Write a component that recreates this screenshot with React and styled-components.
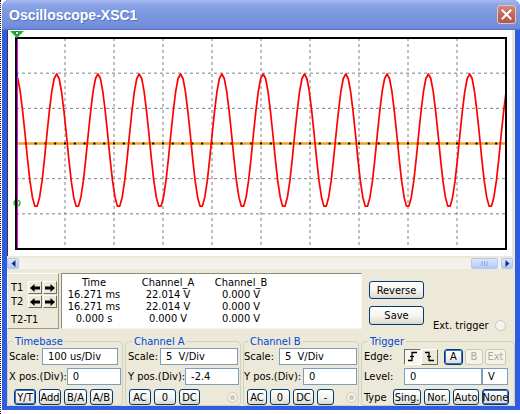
import React from 'react';
import styled, { createGlobalStyle } from 'styled-components';

const GlobalStyle = createGlobalStyle`
  html, body {
    margin: 0;
    padding: 0;
    background: #fff;
    overflow: hidden;
  }
  body {
    font-family: Tahoma, "DejaVu Sans Condensed", "Liberation Sans", sans-serif;
    font-size: 11px;
  }
`;

const Desk = styled.div`
  width: 520px;
  height: 414px;
  display: flex;
  box-sizing: border-box;
  border-left: 1px dotted #222;
  padding-left: 1px;
`;

const Window = styled.div`
  width: 518px;
  height: 410px;
  display: flex;
  flex-direction: column;
  background: #2f5ce0;
  border-radius: 7px 7px 0 0;
  overflow: hidden;
`;

const TitleBar = styled.div`
  height: 30px;
  flex: none;
  display: flex;
  align-items: center;
  justify-content: space-between;
  padding: 0 4px 0 7px;
  box-sizing: border-box;
  background: linear-gradient(180deg, #a7bbf0 0%, #8aa3e6 18%, #7b96df 50%, #7590dc 85%, #6a86d6 100%);
  border-bottom: 1px solid #5874c6;
`;

const Title = styled.span`
  color: #fff;
  font-family: "Liberation Sans", Arial, sans-serif;
  font-weight: bold;
  font-size: 14px;
  text-shadow: 1px 1px 0 rgba(40, 60, 140, 0.4);
`;

const CloseButton = styled.div`
  width: 19px;
  height: 19px;
  box-sizing: border-box;
  border: 1px solid #e9c4bb;
  border-radius: 3px;
  background: linear-gradient(180deg, #d48a7b 0%, #c0675a 50%, #b25a4f 100%);
  display: flex;
  align-items: center;
  justify-content: center;
`;

const Body = styled.div`
  flex: 1;
  margin: 0 5px 4px 5px;
  background: #ece9d8;
  display: flex;
  flex-direction: column;
`;

const Screen = styled.div`
  height: 226px;
  flex: none;
  margin-right: 3px;
  background: #fff;
  border-left: 1px solid #3c3c3c;
  box-sizing: border-box;
`;

const HScroll = styled.div`
  height: 11px;
  margin: 2px 2px 0 0;
  display: flex;
  background: #f3f1ea;
`;

const ScrollBtn = styled.div`
  width: ${({ $w }) => $w}px;
  box-sizing: border-box;
  border: 1px solid #b4c6f2;
  border-radius: 2px;
  background: linear-gradient(180deg, #dde6fd 0%, #c4d4fb 60%, #b3c6f6 100%);
  display: flex;
  align-items: center;
  justify-content: center;
  margin-left: ${({ $ml }) => $ml || 0};
`;

const Controls = styled.div`
  display: flex;
  flex-direction: column;
  padding-top: 4px;
  gap: 6px;
`;

const TopRow = styled.div`
  height: 56px;
  display: flex;
`;

const CursorBox = styled.div`
  width: 52px;
  box-sizing: border-box;
  border: 1px solid;
  border-color: #fff #9d9a8a #9d9a8a #fff;
  display: grid;
  grid-template-columns: 1fr auto;
  grid-template-rows: 13px 13px 1fr;
  row-gap: 1px;
  padding: 7px 1px 0 3px;
`;

const CursorLabel = styled.span`
  display: flex;
  align-items: center;
  grid-column: ${({ $span }) => ($span ? '1 / 3' : 'auto')};
  padding-top: ${({ $span }) => ($span ? '1px' : 0)};
`;

const ArrowPair = styled.div`
  display: flex;
  gap: 1px;
`;

const ArrowBtn = styled.div`
  width: 14px;
  height: 13px;
  box-sizing: border-box;
  border: 1px solid;
  border-color: #fff #716f64 #716f64 #fff;
  background: #ece9d8;
  display: flex;
  align-items: center;
  justify-content: center;
`;

const Readout = styled.div`
  width: 301px;
  margin-left: 2px;
  box-sizing: border-box;
  background: #fff;
  border: 1px solid;
  border-color: #8a887c #f6f5f0 #f6f5f0 #8a887c;
  display: grid;
  grid-template-columns: 64px 84px 62px;
  grid-auto-rows: 12px;
  padding-top: 3px;
`;

const Cell = styled.span`
  text-align: center;
  line-height: 12px;
  white-space: nowrap;
`;

const SideButtons = styled.div`
  display: flex;
  flex-direction: column;
  gap: 7px;
  margin-left: 7px;
  padding-top: 8px;
`;

const XpButton = styled.div`
  width: ${({ $w }) => $w}px;
  height: ${({ $h }) => $h || 16}px;
  box-sizing: border-box;
  border: 1px solid ${({ $off }) => ($off ? '#c9c7ba' : '#003c74')};
  border-radius: 3px;
  background: ${({ $off }) =>
    $off ? '#f5f4ea' : 'linear-gradient(180deg, #ffffff 0%, #f4f3ee 55%, #dcd8cc 100%)'};
  color: ${({ $off }) => ($off ? '#aca899' : '#000')};
  box-shadow: ${({ $on }) => ($on ? 'inset 0 0 0 1px #3d6fd0' : 'none')};
  display: flex;
  align-items: center;
  justify-content: center;
  white-space: nowrap;
  flex: none;
`;

const ExtTrigger = styled.div`
  align-self: flex-end;
  margin: 0 0 -3px 9px;
  display: flex;
  align-items: center;
  gap: 6px;
  height: 14px;
`;

const Radio = styled.div`
  width: 11px;
  height: 11px;
  box-sizing: border-box;
  border-radius: 50%;
  border: 1px solid #cac8bb;
  background: #f4f3ee;
  display: flex;
  align-items: center;
  justify-content: center;
  flex: none;
  margin-left: ${({ $ml }) => $ml || 0};
  &::after {
    content: '';
    display: ${({ $dot }) => ($dot ? 'block' : 'none')};
    width: 5px;
    height: 5px;
    border-radius: 50%;
    background: #cdcbc0;
  }
`;

const BottomRow = styled.div`
  height: 71px;
  display: flex;
  gap: 2px;
`;

const Group = styled.fieldset`
  width: ${({ $w }) => $w}px;
  margin: 0;
  padding: 0 ${({ $pr }) => $pr ?? 3}px 0 ${({ $pl }) => $pl ?? 1}px;
  box-sizing: border-box;
  border: 1px solid #d0d0bf;
  border-radius: 4px;
  display: flex;
  flex-direction: column;
  gap: 3px;
  min-width: 0;
`;

const Legend = styled.legend`
  color: #0046d5;
  padding: 0 2px;
  margin-left: 4px;
  line-height: 13px;
`;

const Row = styled.div`
  height: ${({ $h }) => $h || 17}px;
  display: flex;
  align-items: center;
  gap: ${({ $gap }) => $gap ?? 0}px;
  justify-content: ${({ $spread }) => ($spread ? 'space-between' : 'flex-start')};
  margin-top: ${({ $mt }) => $mt || 0}px;
  padding-left: ${({ $pl }) => $pl || 0}px;
`;

const Label = styled.span`
  width: ${({ $w }) => ($w ? `${$w}px` : 'auto')};
  flex: none;
  white-space: nowrap;
`;

const Field = styled.div`
  width: ${({ $w }) => $w}px;
  height: 17px;
  box-sizing: border-box;
  border: 1px solid #7f9db9;
  background: #fff;
  padding-left: 5px;
  line-height: 15px;
  white-space: pre;
  flex: none;
`;

const EdgeBtn = styled.div`
  width: 17px;
  height: 16px;
  box-sizing: border-box;
  border: 1px solid;
  border-color: ${({ $down }) => ($down ? '#716f64 #fff #fff #716f64' : '#fff #716f64 #716f64 #fff')};
  background: ${({ $down }) => ($down ? '#f7f6f1' : '#ece9d8')};
  display: flex;
  align-items: center;
  justify-content: center;
  flex: none;
`;

const Arrow = ({ dir }) => (
  <svg width="10" height="8" viewBox="0 0 10 8">
    <path
      d="M0 4 L4.5 0 V2.5 H10 V5.5 H4.5 V8 Z"
      fill="#000"
      transform={dir === 'right' ? 'translate(10 0) scale(-1 1)' : undefined}
    />
  </svg>
);

const EdgeIcon = ({ falling }) => (
  <svg width="11" height="11" viewBox="0 0 11 11">
    <path
      d={falling ? 'M1 1.5 H5 V9.5 H10' : 'M1 9.5 H5 V1.5 H10'}
      stroke="#000"
      strokeWidth="1.3"
      fill="none"
    />
    <path d="M3 5.5 H7" stroke="#000" strokeWidth="1.3" />
  </svg>
);

// scope samples: odd count per period, so peaks come out pointed and troughs flat
const PERIOD = 41.3;
const SAMPLES = 17;
const wavePoints = (left, right) => {
  const step = PERIOD / SAMPLES;
  const peak = 48.65;
  const pts = [];
  let x = peak - step * Math.ceil((peak - left) / step);
  for (; x <= right; x += step) {
    const y = 110.6 - 66.6 * Math.cos((2 * Math.PI * (x - peak)) / PERIOD);
    pts.push(`${x.toFixed(1)},${y.toFixed(1)}`);
  }
  return pts.join(' ');
};

const ScopeDisplay = () => {
  const left = 8;
  const right = 498;
  const top = 8;
  const bottom = 219;
  const colW = (right - left) / 10;
  const rowH = (bottom - top) / 6;

  const ticks = [];
  for (let x = left + colW / 5; x < right - 1; x += colW / 5) ticks.push(x);

  return (
    <svg width="504" height="226" viewBox="0 0 504 226">
      <defs>
        <clipPath id="plot">
          <rect x={left} y={top} width={right - left} height={bottom - top} />
        </clipPath>
      </defs>
      {Array.from({ length: 9 }, (_, i) => (
        <line
          key={`v${i}`}
          x1={left + colW * (i + 1)}
          x2={left + colW * (i + 1)}
          y1={top}
          y2={bottom}
          stroke="#808080"
          strokeDasharray="3 3"
        />
      ))}
      {Array.from({ length: 5 }, (_, i) => (
        <line
          key={`h${i}`}
          x1={left}
          x2={right}
          y1={top + rowH * (i + 1)}
          y2={top + rowH * (i + 1)}
          stroke="#808080"
          strokeDasharray="3 3"
        />
      ))}
      <line x1={left} x2={right} y1={113.5} y2={113.5} stroke="#f3a020" strokeWidth="2.5" />
      {ticks.map((x) => (
        <rect key={x} x={x - 1} y={112.5} width="2" height="2" fill="#000" />
      ))}
      <polyline
        points={wavePoints(left, right + 10)}
        fill="none"
        stroke="#ff0000"
        strokeWidth="1.7"
        strokeLinejoin="round"
        clipPath="url(#plot)"
      />
      <line x1="9" x2="9" y1={top} y2={bottom} stroke="#ff00ff" strokeWidth="2" />
      <rect x="8" y="43" width="2" height="3" fill="#1030ff" />
      <circle cx="9" cy="173" r="3" fill="none" stroke="#00c000" strokeWidth="1.2" />
      <rect x={left} y={top} width={right - left} height={bottom - top} fill="none" stroke="#000" strokeWidth="2" />
      <polygon points="2,1 16,1 9,8" fill="#10c010" />
      <circle cx="9" cy="3" r="1.6" fill="#fff" stroke="#2040c0" strokeWidth="0.8" />
    </svg>
  );
};

const App = () => {
  return (
    <>
      <GlobalStyle />
      <Desk>
        <Window>
          <TitleBar>
            <Title>Oscilloscope-XSC1</Title>
            <CloseButton>
              <svg width="11" height="11" viewBox="0 0 11 11">
                <path d="M1.5 1.5 L9.5 9.5 M9.5 1.5 L1.5 9.5" stroke="#fff" strokeWidth="2" strokeLinecap="square" />
              </svg>
            </CloseButton>
          </TitleBar>
          <Body>
            <Screen>
              <ScopeDisplay />
            </Screen>
            <HScroll>
              <ScrollBtn $w={12}>
                <svg width="5" height="7" viewBox="0 0 5 7">
                  <path d="M4.5 0 L0.5 3.5 L4.5 7 Z" fill="#1c2e6e" />
                </svg>
              </ScrollBtn>
              <ScrollBtn $w={27} $ml="auto">
                <svg width="7" height="5" viewBox="0 0 7 5">
                  <path d="M1 0 V5 M3.5 0 V5 M6 0 V5" stroke="#8ea6e8" strokeWidth="1" />
                </svg>
              </ScrollBtn>
              <ScrollBtn $w={12} $ml="3px">
                <svg width="5" height="7" viewBox="0 0 5 7">
                  <path d="M0.5 0 L4.5 3.5 L0.5 7 Z" fill="#1c2e6e" />
                </svg>
              </ScrollBtn>
            </HScroll>
            <Controls>
              <TopRow>
                <CursorBox>
                  <CursorLabel>T1</CursorLabel>
                  <ArrowPair>
                    <ArrowBtn><Arrow dir="left" /></ArrowBtn>
                    <ArrowBtn><Arrow dir="right" /></ArrowBtn>
                  </ArrowPair>
                  <CursorLabel>T2</CursorLabel>
                  <ArrowPair>
                    <ArrowBtn><Arrow dir="left" /></ArrowBtn>
                    <ArrowBtn><Arrow dir="right" /></ArrowBtn>
                  </ArrowPair>
                  <CursorLabel $span>T2-T1</CursorLabel>
                </CursorBox>
                <Readout>
                  <Cell>Time</Cell>
                  <Cell>Channel_A</Cell>
                  <Cell>Channel_B</Cell>
                  <Cell>16.271 ms</Cell>
                  <Cell>22.014 V</Cell>
                  <Cell>0.000 V</Cell>
                  <Cell>16.271 ms</Cell>
                  <Cell>22.014 V</Cell>
                  <Cell>0.000 V</Cell>
                  <Cell>0.000 s</Cell>
                  <Cell>0.000 V</Cell>
                  <Cell>0.000 V</Cell>
                </Readout>
                <SideButtons>
                  <XpButton $w={55} $h={18}>Reverse</XpButton>
                  <XpButton $w={55} $h={19}>Save</XpButton>
                </SideButtons>
                <ExtTrigger>
                  <span>Ext. trigger</span>
                  <Radio />
                </ExtTrigger>
              </TopRow>
              <BottomRow>
                <Group $w={116} $pr={4}>
                  <Legend>Timebase</Legend>
                  <Row $spread>
                    <Label>Scale:</Label>
                    <Field $w={76}>100 us/Div</Field>
                  </Row>
                  <Row $spread>
                    <Label>X pos.(Div):</Label>
                    <Field $w={54}>0</Field>
                  </Row>
                  <Row $h={16} $mt={1} $gap={3} $pl={5}>
                    <XpButton $w={22} $on>Y/T</XpButton>
                    <XpButton $w={22}>Add</XpButton>
                    <XpButton $w={23}>B/A</XpButton>
                    <XpButton $w={23}>A/B</XpButton>
                  </Row>
                </Group>
                <Group $w={116} $pl={2} $pr={2}>
                  <Legend>Channel A</Legend>
                  <Row $spread>
                    <Label>Scale:</Label>
                    <Field $w={78}>5  V/Div</Field>
                  </Row>
                  <Row $spread>
                    <Label>Y pos.(Div):</Label>
                    <Field $w={54}>-2.4</Field>
                  </Row>
                  <Row $h={16} $mt={1} $gap={3} $pl={1}>
                    <XpButton $w={22}>AC</XpButton>
                    <XpButton $w={22}>0</XpButton>
                    <XpButton $w={21}>DC</XpButton>
                    <Radio $dot $ml="auto" />
                  </Row>
                </Group>
                <Group $w={116} $pl={0} $pr={1}>
                  <Legend>Channel B</Legend>
                  <Row $spread>
                    <Label>Scale:</Label>
                    <Field $w={78}>5  V/Div</Field>
                  </Row>
                  <Row $spread>
                    <Label>Y pos.(Div):</Label>
                    <Field $w={54}>0</Field>
                  </Row>
                  <Row $h={16} $mt={1} $gap={3} $pl={3}>
                    <XpButton $w={20}>AC</XpButton>
                    <XpButton $w={20}>0</XpButton>
                    <XpButton $w={21}>DC</XpButton>
                    <XpButton $w={17}>-</XpButton>
                    <Radio $dot $ml="auto" />
                  </Row>
                </Group>
                <Group $w={154} $pl={2} $pr={4}>
                  <Legend>Trigger</Legend>
                  <Row>
                    <Label $w={40}>Edge:</Label>
                    <EdgeBtn $down><EdgeIcon /></EdgeBtn>
                    <EdgeBtn><EdgeIcon falling /></EdgeBtn>
                    <Row $gap={2} $pl={6}>
                      <XpButton $w={19} $on>A</XpButton>
                      <XpButton $w={18} $off>B</XpButton>
                      <XpButton $w={21} $off>Ext</XpButton>
                    </Row>
                  </Row>
                  <Row>
                    <Label $w={40}>Level:</Label>
                    <Field $w={78}>0</Field>
                    <Field $w={26}>V</Field>
                  </Row>
                  <Row $h={16} $mt={1} $gap={3}>
                    <Label $w={26}>Type</Label>
                    <XpButton $w={28}>Sing.</XpButton>
                    <XpButton $w={26}>Nor.</XpButton>
                    <XpButton $w={26}>Auto</XpButton>
                    <XpButton $w={27} $on>None</XpButton>
                  </Row>
                </Group>
              </BottomRow>
            </Controls>
          </Body>
        </Window>
      </Desk>
    </>
  );
};

export default App;
